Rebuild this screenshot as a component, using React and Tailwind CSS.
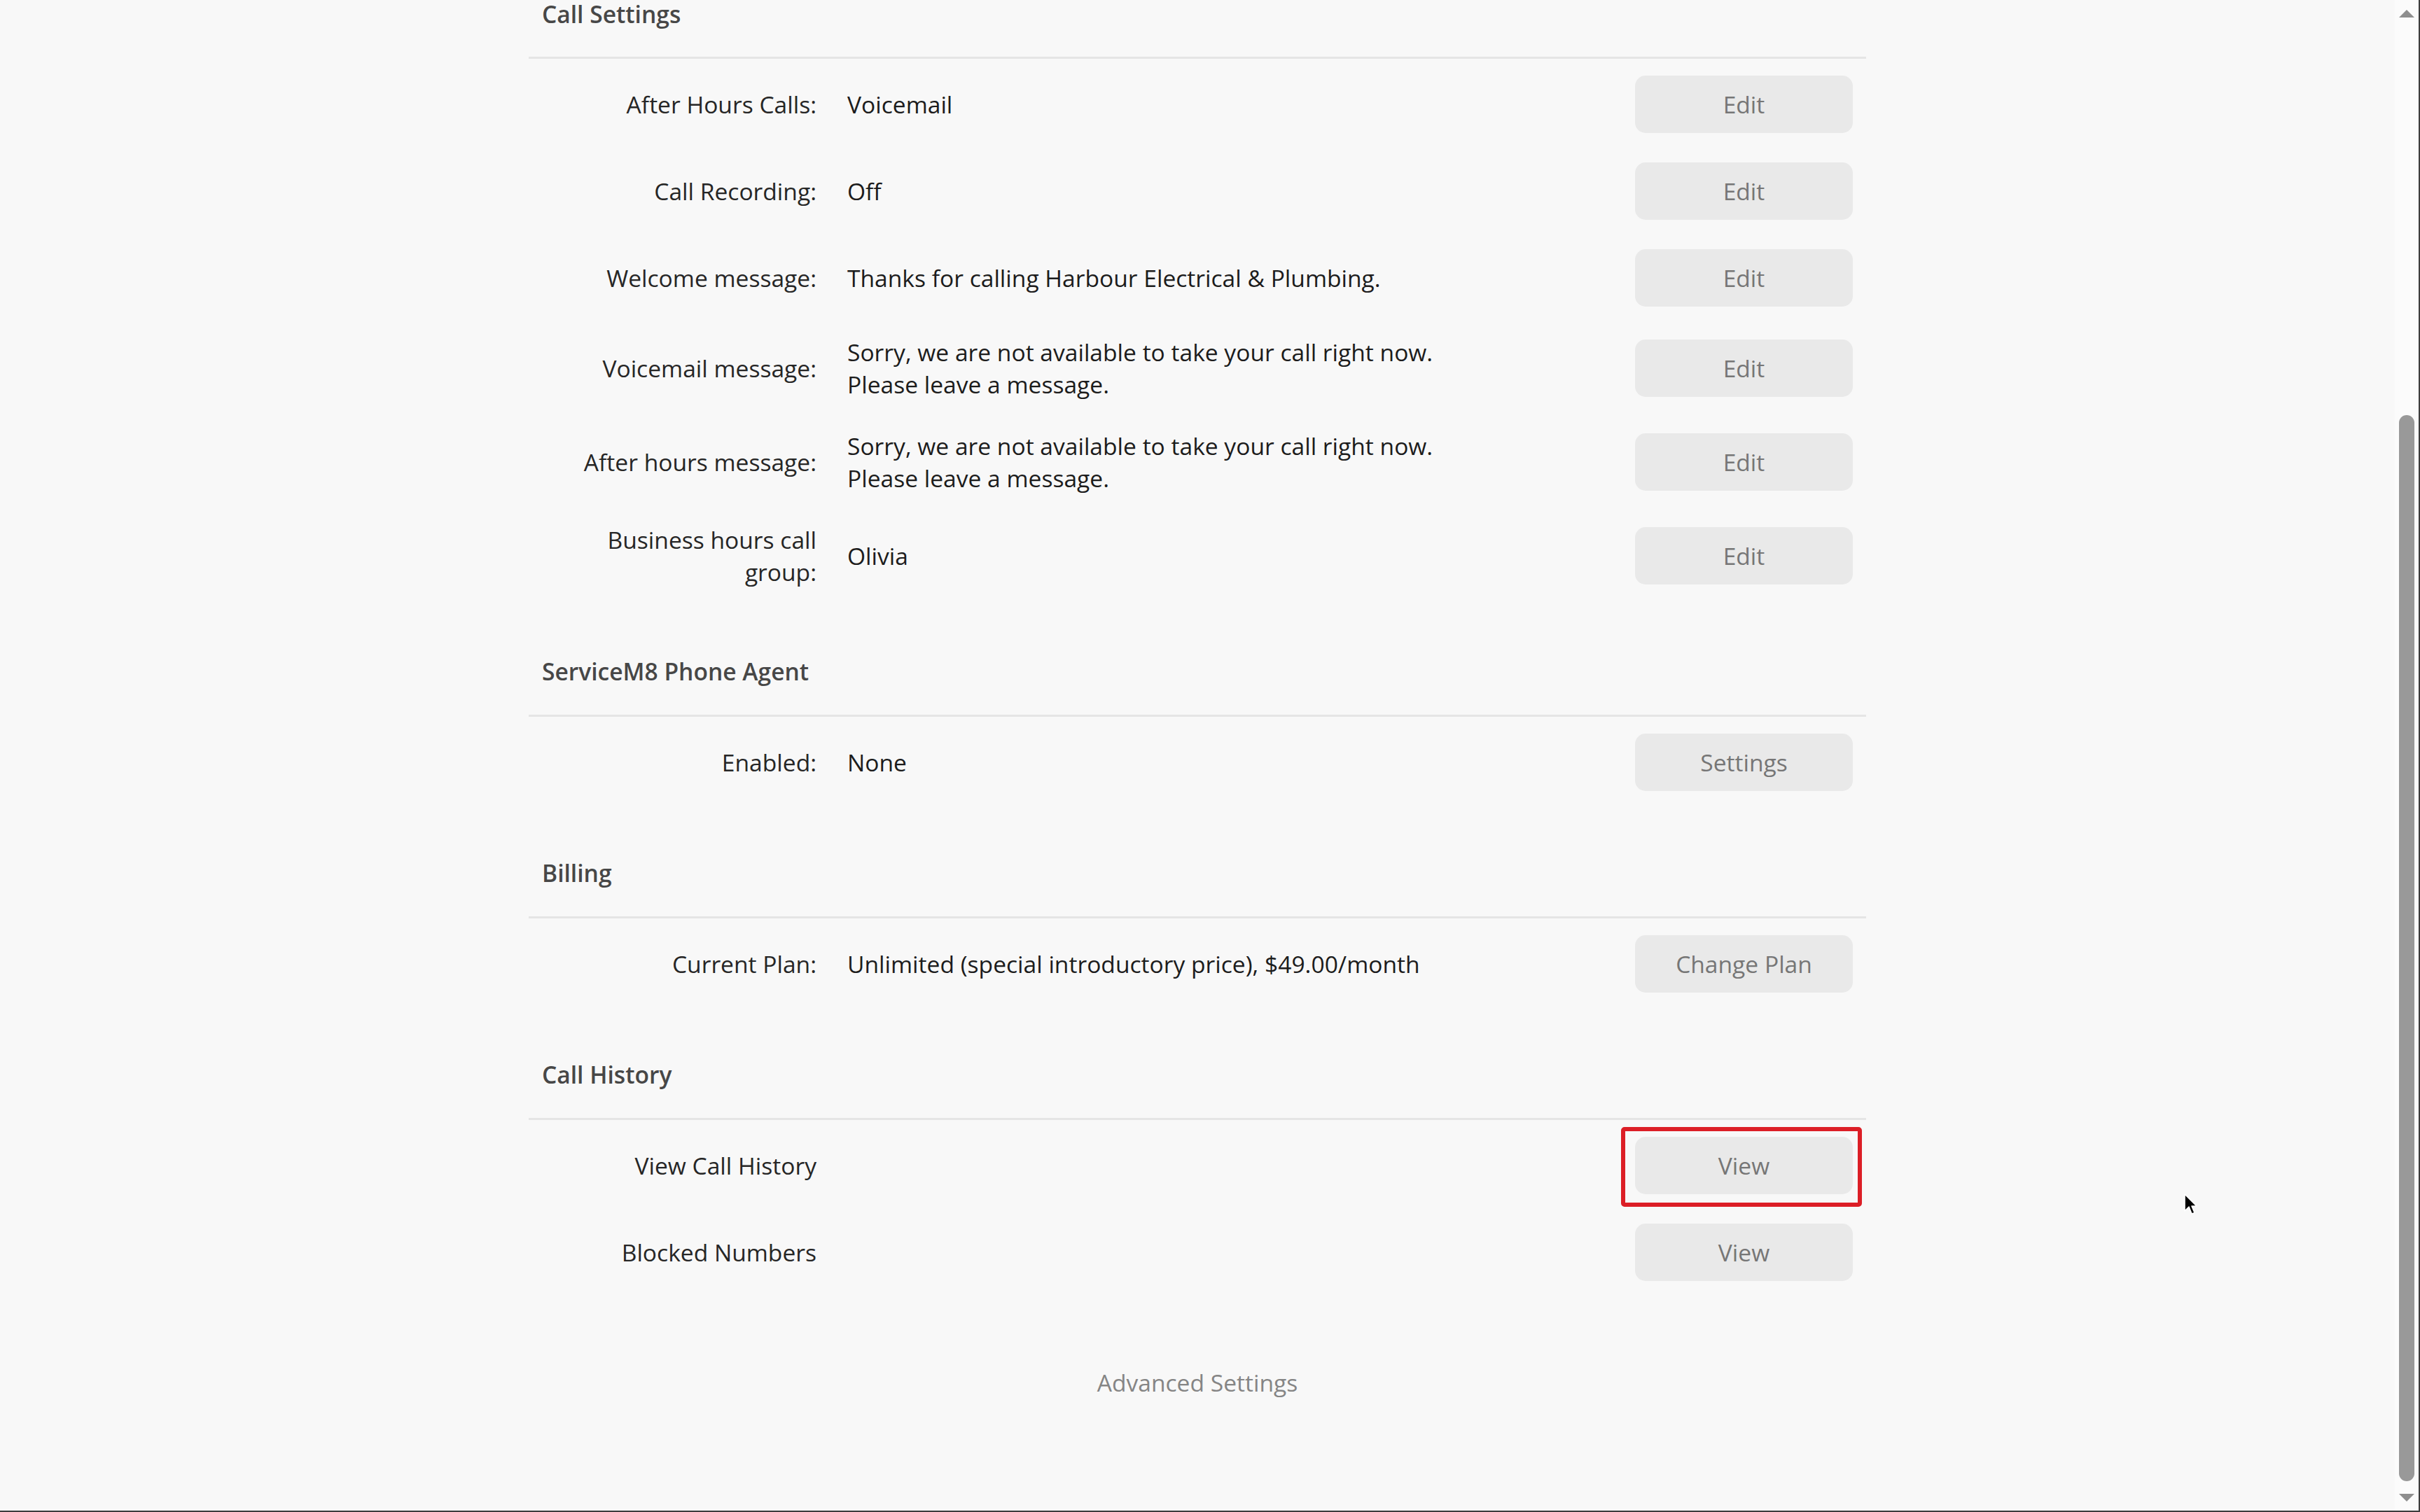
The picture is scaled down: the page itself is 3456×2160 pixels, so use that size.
import React from 'react';

const sections = [
  {
    title: 'Call Settings',
    rows: [
      { label: 'After Hours Calls:', value: ['Voicemail'], action: 'Edit' },
      { label: 'Call Recording:', value: ['Off'], action: 'Edit' },
      { label: 'Welcome message:', value: ['Thanks for calling Harbour Electrical & Plumbing.'], action: 'Edit' },
      { label: 'Voicemail message:', value: ['Sorry, we are not available to take your call right now.', 'Please leave a message.'], action: 'Edit' },
      { label: 'After hours message:', value: ['Sorry, we are not available to take your call right now.', 'Please leave a message.'], action: 'Edit' },
      { label: 'Business hours call group:', value: ['Olivia'], action: 'Edit' },
    ],
  },
  {
    title: 'ServiceM8 Phone Agent',
    rows: [{ label: 'Enabled:', value: ['None'], action: 'Settings' }],
  },
  {
    title: 'Billing',
    rows: [{ label: 'Current Plan:', value: ['Unlimited (special introductory price), $49.00/month'], action: 'Change Plan' }],
  },
  {
    title: 'Call History',
    rows: [
      { label: 'View Call History', value: [], action: 'View', highlight: true },
      { label: 'Blocked Numbers', value: [], action: 'View' },
    ],
  },
];

function SettingRow({ row }) {
  return (
    <div className="flex items-center py-[21px]">
      <div className="w-[411px] shrink-0 pl-[40px] text-right text-[#262626]">{row.label}</div>
      <div className="flex-1 pl-[44px] pr-[40px] text-[#1c1c1c]">
        {row.value.map((line) => (
          <div key={line}>{line}</div>
        ))}
      </div>
      <div className="relative mr-[19px] shrink-0">
        <button className="w-[311px] h-[82px] rounded-[15px] bg-[#e9e9e9] text-[#767676]">
          {row.action}
        </button>
        {row.highlight && (
          <div className="absolute -left-[20px] -right-[13px] -top-[14px] -bottom-[18px] border-[6px] border-[#dc1e26] rounded-[5px]" />
        )}
      </div>
    </div>
  );
}

function Scrollbar() {
  return (
    <div className="w-[36px] shrink-0 flex flex-col items-center bg-[#fbfbfb] border-r-2 border-[#3c3c3c]">
      <svg width="22" height="11" viewBox="0 0 22 11" className="mt-[14px]">
        <polygon points="11,0 22,11 0,11" fill="#8e8e8e" />
      </svg>
      <div className="mt-[568px] w-[22px] h-[1523px] rounded-full bg-[#999999]" />
      <svg width="22" height="11" viewBox="0 0 22 11" className="mt-[18px]">
        <polygon points="0,0 22,0 11,11" fill="#8e8e8e" />
      </svg>
    </div>
  );
}

export default function App() {
  return (
    <div
      className="relative flex h-screen overflow-hidden bg-[#f8f8f8] border-b-2 border-[#3c3c3c] text-[33.6px] leading-[46px]"
      style={{ fontFamily: '"Open Sans", "Noto Sans", Arial, sans-serif' }}
    >
      <main className="flex-1 min-w-0">
        <div className="w-[1910px] mx-auto">
          {sections.map((section, i) => (
            <section key={section.title} className={i === 0 ? '' : i === 1 ? 'mt-[75px]' : 'mt-[73px]'}>
              <h3
                className={
                  i === 0
                    ? 'pl-[19px] pt-[3px] pb-[44px] leading-[34px] font-semibold text-[#474747] border-b-[3px] border-[#e5e5e5]'
                    : 'pl-[19px] pb-[39px] font-semibold text-[#474747] border-b-[3px] border-[#e5e5e5]'
                }
              >
                {section.title}
              </h3>
              <div className="pt-[3px]">
                {section.rows.map((row) => (
                  <SettingRow key={row.label} row={row} />
                ))}
              </div>
            </section>
          ))}

          <div className="mt-[101px] text-center text-[#858585]">Advanced Settings</div>
        </div>
      </main>

      <Scrollbar />

      {/* mouse pointer */}
      <svg className="absolute left-[3118px] top-[1704px]" width="22" height="34" viewBox="0 0 22 34">
        <path d="M2 2 L2 26 L8 20 L12 30 L16 28.5 L12 19 L19 19 Z" fill="#000" stroke="#fff" strokeWidth="1.6" strokeLinejoin="round" />
      </svg>
    </div>
  );
}
